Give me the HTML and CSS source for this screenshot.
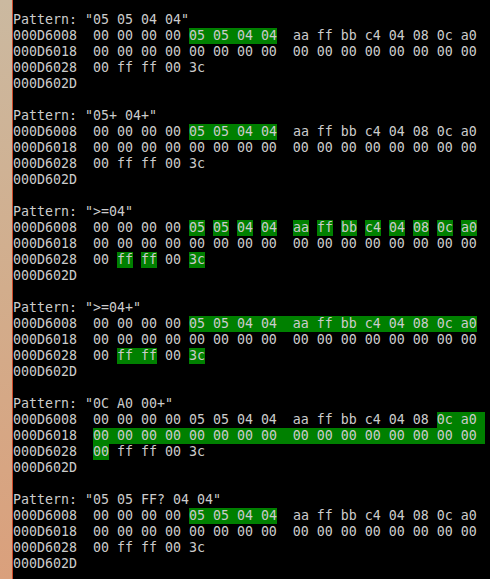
FILE: index.html
```html
<!DOCTYPE html>
<html>
<head>
<meta charset="utf-8">
<link rel="stylesheet" href="styles.css">
</head>
<body>
<div class="frame">
  <div class="edge"></div>
  <div class="term">
    <div class="ln">Pattern: "05 05 04 04"</div>
    <div class="ln">000D6008  00 00 00 00 <span class="hl">05 05 04 04</span>  aa ff bb c4 04 08 0c a0</div>
    <div class="ln">000D6018  00 00 00 00 00 00 00 00  00 00 00 00 00 00 00 00</div>
    <div class="ln">000D6028  00 ff ff 00 3c</div>
    <div class="ln">000D602D</div>
    <div class="ln"> </div>

    <div class="ln">Pattern: "05+ 04+"</div>
    <div class="ln">000D6008  00 00 00 00 <span class="hl">05 05 04 04</span>  aa ff bb c4 04 08 0c a0</div>
    <div class="ln">000D6018  00 00 00 00 00 00 00 00  00 00 00 00 00 00 00 00</div>
    <div class="ln">000D6028  00 ff ff 00 3c</div>
    <div class="ln">000D602D</div>
    <div class="ln"> </div>

    <div class="ln">Pattern: "&gt;=04"</div>
    <div class="ln">000D6008  00 00 00 00 <span class="hl">05</span> <span class="hl">05</span> <span class="hl">04</span> <span class="hl">04</span>  <span class="hl">aa</span> <span class="hl">ff</span> <span class="hl">bb</span> <span class="hl">c4</span> <span class="hl">04</span> <span class="hl">08</span> <span class="hl">0c</span> <span class="hl">a0</span></div>
    <div class="ln">000D6018  00 00 00 00 00 00 00 00  00 00 00 00 00 00 00 00</div>
    <div class="ln">000D6028  00 <span class="hl">ff</span> <span class="hl">ff</span> 00 <span class="hl">3c</span></div>
    <div class="ln">000D602D</div>
    <div class="ln"> </div>

    <div class="ln">Pattern: "&gt;=04+"</div>
    <div class="ln">000D6008  00 00 00 00 <span class="hl">05 05 04 04  aa ff bb c4 04 08 0c a0</span></div>
    <div class="ln">000D6018  00 00 00 00 00 00 00 00  00 00 00 00 00 00 00 00</div>
    <div class="ln">000D6028  00 <span class="hl">ff ff</span> 00 <span class="hl">3c</span></div>
    <div class="ln">000D602D</div>
    <div class="ln"> </div>

    <div class="ln">Pattern: "0C A0 00+"</div>
    <div class="ln">000D6008  00 00 00 00 05 05 04 04  aa ff bb c4 04 08 <span class="hl">0c a0 </span></div>
    <div class="ln">000D6018  <span class="hl">00 00 00 00 00 00 00 00  00 00 00 00 00 00 00 00 </span></div>
    <div class="ln">000D6028  <span class="hl">00</span> ff ff 00 3c</div>
    <div class="ln">000D602D</div>
    <div class="ln"> </div>

    <div class="ln">Pattern: "05 05 FF? 04 04"</div>
    <div class="ln">000D6008  00 00 00 00 <span class="hl">05 05 04 04</span>  aa ff bb c4 04 08 0c a0</div>
    <div class="ln">000D6018  00 00 00 00 00 00 00 00  00 00 00 00 00 00 00 00</div>
    <div class="ln">000D6028  00 ff ff 00 3c</div>
    <div class="ln">000D602D</div>
    <div class="ln"> </div>
  </div>
</div>
</body>
</html>
```
FILE: styles.css
```css
html, body {
  margin: 0;
  padding: 0;
  background: #000;
  width: 490px;
  height: 579px;
  overflow: hidden;
}
.frame {
  display: flex;
  height: 579px;
}
.edge {
  width: 12px;
  flex: none;
  background: linear-gradient(to bottom, #cbb9a0 0%, #d2ad8c 50%, #daa07c 100%);
  border-right: 1px solid #cc4a2a;
}
.term {
  flex: 1;
  background: #000;
  padding-top: 12px;
  font-family: "DejaVu Sans Mono", "Liberation Mono", monospace;
  font-size: 13.29px;
  color: #cccccc;
  overflow: hidden;
}
.ln {
  height: 16px;
  line-height: 16px;
  white-space: pre;
}
.hl {
  display: inline-block;
  vertical-align: top;
  height: 16px;
  line-height: 16px;
  background: #008000;
  white-space: pre;
}
```
